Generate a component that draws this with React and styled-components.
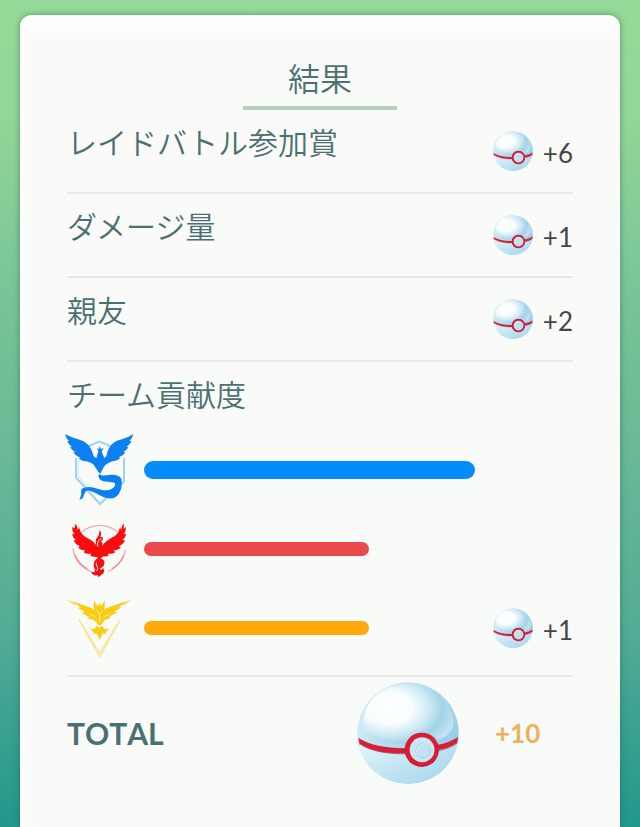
import React, { useId } from 'react'
import styled, { createGlobalStyle } from 'styled-components'

const rewards = [
  { label: 'レイドバトル参加賞', count: 6 },
  { label: 'ダメージ量', count: 1 },
  { label: '親友', count: 2 },
]

const PremierBall = ({ size }) => {
  const id = useId()

  return (
    <BallSvg $size={size} viewBox="38 35 304 304" aria-hidden="true">
      <defs>
        <linearGradient id={`${id}body`} x1="0.1" y1="0.1" x2="0.9" y2="0.7">
          <stop offset="0" stopColor="#d9eff8" />
          <stop offset="0.5" stopColor="#b3dcee" />
          <stop offset="1" stopColor="#98cce4" />
        </linearGradient>
        <radialGradient id={`${id}shine`} cx="0.28" cy="0.4" r="0.75">
          <stop offset="0" stopColor="#ffffff" />
          <stop offset="0.35" stopColor="#f8fdfe" />
          <stop offset="0.6" stopColor="#cde9f4" />
          <stop offset="0.8" stopColor="#a3d3e9" />
          <stop offset="1" stopColor="#bfe2f0" />
        </radialGradient>
        <linearGradient id={`${id}base`} x1="0" y1="0" x2="0.9" y2="0.8">
          <stop offset="0" stopColor="#eaf7fc" />
          <stop offset="0.5" stopColor="#c8e7f4" />
          <stop offset="1" stopColor="#aad8ec" />
        </linearGradient>
      </defs>
      <circle cx="190" cy="187" r="151" fill={`url(#${id}body)`} />
      <path d="M57 165C55 92 112 41 190 40C262 40 320 93 325 152C327 178 310 198 281 207C268 190 250 183 231 183C209 183 194 193 185 221C140 222 62 210 57 165Z" fill={`url(#${id}shine)`} />
      <path d="M40 205C90 237 130 242 181 243L281 236C305 230 325 220 339 208C331 283 268 338 190 338C110 338 45 280 40 205Z" fill={`url(#${id}base)`} />
      <path d="M42 202C80 225 130 233 184 232V248C130 249 80 242 45 218Z" fill="#d81e35" />
      <path d="M278 222C302 219 320 211 339 199L337 215C322 227 303 234 278 238Z" fill="#d81e35" />
      <path d="M44 219C80 242 130 250 184 249M279 240C304 235 322 228 336 217" fill="none" stroke="#8f4565" strokeWidth="2" />
      <circle cx="231" cy="237" r="51" fill="#b3203a" />
      <circle cx="231" cy="236" r="49" fill="#dc1c33" />
      <circle cx="232" cy="237" r="37" fill="#c8e7f4" />
      <circle cx="235" cy="240" r="22" fill="#c0e2f2" stroke="#98cae2" strokeWidth="2" />
      <path d="M218 251A22 22 0 0 1 248 222" fill="none" stroke="#eaf7fc" strokeWidth="2" />
    </BallSvg>
  )
}

const MysticEmblem = () => (
  <EmblemSvg viewBox="51 15 198 237" role="img" aria-label="Mystic">
    <path d="M78 100V158L150 237L222 170V100M105 68L148 50L192 68" fill="none" stroke="#9ed0f8" strokeWidth="6" />
    <path d="M85 105V152L112 188" fill="none" stroke="#d3eafb" strokeWidth="4" />
    <g fill="#0c80f2">
      <path d="M46 27C62 38 84 42 99 48C117 57 125 72 131 94L139 100L145 79L141 68L147 73L149 62L153 73L161 68L155 80L163 99L169 94C173 72 182 56 201 47C217 42 236 38 249 27C248 37 244 43 238 48L244 48C241 57 235 62 229 65L235 66C231 75 225 79 219 81L226 82C220 92 212 95 206 96L211 99C204 107 194 108 187 109C177 113 167 117 161 127L151 146L145 141L135 125C130 116 119 111 109 109C101 109 91 106 86 99L92 97C82 95 75 90 70 81L78 81C69 78 64 73 60 65L67 65C58 60 54 54 52 47L58 48C50 42 47 36 46 27Z" />
      <path d="M147 147C156 153 166 152 176 150C192 147 208 150 213 160C218 174 215 192 207 206C198 221 178 224 160 216C145 209 133 201 119 197C105 193 104 207 98 220L88 224C94 213 94 202 94 192C104 185 119 184 133 188C149 193 162 198 176 195C190 192 199 182 194 174C182 169 163 172 152 165C145 159 144 153 147 147Z" />
    </g>
  </EmblemSvg>
)

const ValorEmblem = () => (
  <EmblemSvg viewBox="51 -3 198 237" role="img" aria-label="Valor">
    <path d="M95 67A80 80 0 0 1 203 67M69 116A82 82 0 0 0 122 184M226 120A82 82 0 0 1 173 184" fill="none" stroke="#f5a9ad" strokeWidth="4" />
    <path d="M75 134A80 80 0 0 0 112 176M221 136A80 80 0 0 1 186 176" fill="none" stroke="#f78f97" strokeWidth="4" />
    <g fill="#f60d0d">
      <path d="M75 42L81 48L84 61L87 50C90 67 99 77 111 83C124 89 133 97 141 108C135 99 136 89 142 82C148 76 147 69 149 60C155 67 154 75 151 82C158 79 161 84 157 91L151 96C156 96 160 98 157 106L155 110C163 98 174 89 187 82C199 77 207 67 210 50L213 60L216 47L222 42L221 56L227 51C228 60 226 66 221 73L228 71C228 80 223 86 216 90L225 91C221 101 214 106 207 108L212 113C205 119 198 121 191 121L196 127C188 132 180 132 173 131L176 137C168 141 158 137 154 143L149 151L143 143C137 138 130 141 121 137L124 131C116 132 109 132 101 127L105 121C98 121 91 119 85 113L89 108C81 106 75 101 71 91L79 90C72 86 67 80 67 71L74 73C68 66 66 59 67 51L74 55Z" />
      <path d="M143 145L156 147C164 151 166 158 161 167C157 173 150 173 151 178C153 182 159 177 158 173C166 181 162 190 154 194L145 202L144 196C132 198 123 192 124 183C126 187 132 188 135 184C137 178 131 174 131 165C131 156 135 149 143 145Z" />
    </g>
    <path d="M145 110C139 99 145 92 153 85M139 158C136 169 150 173 139 183" fill="none" stroke="#fbf6f3" strokeWidth="3" />
  </EmblemSvg>
)

const InstinctEmblem = () => (
  <EmblemSvg viewBox="51 -6 198 237" role="img" aria-label="Instinct">
    <path d="M50 28L104 47L69 44ZM246 28L190 47L226 44Z" fill="#f8df7d" />
    <path d="M86 89L149 201L211 89M96 102L149 190L202 102" fill="none" stroke="#f8e49a" strokeWidth="4" />
    <g fill="#fccb12">
      <path d="M68 34L126 55L131 59L132 32L143 48L149 39L153 49L165 31L163 59L170 54L229 34L207 52L214 52L192 66L202 67L178 80L182 84L164 90L158 99L149 108L139 98L132 90L111 85L117 80L94 68L105 66L83 53L91 52Z" />
      <path d="M120 116L135 117L139 107L149 113L158 107L162 117L177 116L166 128L169 133L158 130L149 150L140 130L129 133L132 127Z" />
    </g>
    <path d="M140 61L149 73L158 61M149 75V96M119 72L137 80M179 72L162 80" fill="none" stroke="#fff1b8" strokeWidth="3" />
  </EmblemSvg>
)

const teams = [
  { name: 'Mystic', Emblem: MysticEmblem, color: '#048cff', share: 100, leading: true },
  { name: 'Valor', Emblem: ValorEmblem, color: '#e94a4c', share: 68 },
  { name: 'Instinct', Emblem: InstinctEmblem, color: '#ffa90a', share: 68, bonus: 1 },
]

const Reward = ({ count }) => (
  <RewardWrapper>
    <PremierBall size={40} />
    <RewardCount>+{count}</RewardCount>
  </RewardWrapper>
)

const App = () => {
  const teamBonus = teams.reduce((acc, team) => acc + (team.bonus || 0), 0)
  const total = rewards.reduce((acc, item) => acc + item.count, teamBonus)

  return (
    <Page>
      <GlobalStyle />
      <Card>
        <Title>結果</Title>

        {rewards.map((item) => (
          <RewardRow key={item.label}>
            <Label>{item.label}</Label>
            <Reward count={item.count} />
          </RewardRow>
        ))}

        <TeamSection>
          <TeamTitle>チーム貢献度</TeamTitle>
          {teams.map(({ name, Emblem, color, share, leading, bonus }) => (
            <TeamRow key={name}>
              <Emblem />
              <Track>
                <Bar $color={color} $leading={leading} style={{ width: `${share}%` }} />
              </Track>
              {bonus ? <Reward count={bonus} /> : null}
            </TeamRow>
          ))}
        </TeamSection>

        <TotalRow>
          <TotalLabel>TOTAL</TotalLabel>
          <PremierBall size={102} />
          <TotalCount>+{total}</TotalCount>
        </TotalRow>
      </Card>
    </Page>
  )
}

const GlobalStyle = createGlobalStyle`
  * {
    box-sizing: border-box;
  }

  body {
    margin: 0;
    font-family: Lato, 'Noto Sans CJK JP', sans-serif;
    color: #4a7073;
  }
`

const Page = styled.div`
  display: flex;
  min-height: 100vh;
  padding: 15px 20px 0;
  background: linear-gradient(#95da96 0%, #91d696 15%, #7fc897 30%, #55ac95 75%, #22978c 100%);
`

const Card = styled.main`
  flex: 1;
  min-width: 0;
  padding: 37px 47px 38px;
  border-radius: 12px 12px 0 0;
  background: linear-gradient(#ffffff, #fafbf9 24px, #f9fbf8);
  box-shadow: 0 0 6px rgba(20, 90, 70, 0.5), inset 14px 0 14px -8px #fdfdfd;
`

const Title = styled.h1`
  width: 154px;
  margin: 0 auto;
  border-bottom: 4px solid #b0d3c0;
  font-size: 32px;
  font-weight: 350;
  line-height: 54px;
  text-align: center;
`

const RewardRow = styled.div`
  display: flex;
  justify-content: space-between;
  align-items: center;
  height: 84px;
  border-bottom: 2px solid #e7e9e7;
`

const Label = styled.span`
  align-self: flex-start;
  font-size: 30px;
  font-weight: 350;
  line-height: 64px;
`

const RewardWrapper = styled.div`
  flex: none;
  display: flex;
  justify-content: space-between;
  align-items: center;
  width: 80px;
`

const RewardCount = styled.span`
  padding-top: 4px;
  font-size: 26px;
  color: #454747;
`

const BallSvg = styled.svg`
  flex: none;
  width: ${(props) => props.$size}px;
  height: ${(props) => props.$size}px;
`

const TeamSection = styled.section`
  padding-bottom: 8px;
  border-bottom: 2px solid #e7e9e7;
`

const TeamTitle = styled.h2`
  margin: 0;
  padding-bottom: 4px;
  font-size: 30px;
  font-weight: 350;
  line-height: 64px;
`

const TeamRow = styled.div`
  display: grid;
  grid-template-columns: 66px 1fr 80px;
  align-items: center;
  height: 79px;
`

const EmblemSvg = styled.svg`
  width: 66px;
  height: 79px;
  overflow: visible;
`

const Track = styled.div`
  padding: 0 18px 0 11px;
`

const Bar = styled.div`
  height: ${(props) => (props.$leading ? 18 : 14)}px;
  border-radius: 9px;
  background: ${(props) => props.$color};
`

const TotalRow = styled.div`
  display: grid;
  grid-template-columns: 1fr 102px 114px;
  align-items: center;
  height: 112px;
  font-weight: 700;
`

const TotalLabel = styled.span`
  font-size: 30px;
  font-kerning: none;
`

const TotalCount = styled.span`
  padding-left: 36px;
  font-size: 26px;
  color: #edb05c;
`

export default App
